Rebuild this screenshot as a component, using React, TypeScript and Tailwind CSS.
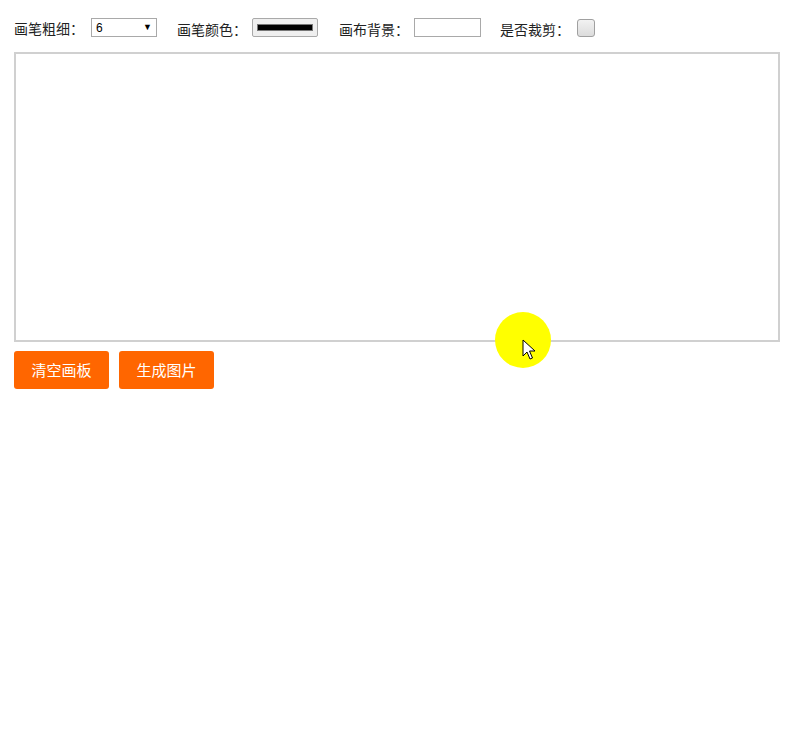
import React from 'react';

const font = { fontFamily: '"Noto Sans CJK SC", "Noto Sans", sans-serif' };

const Label = ({ children }: { children: React.ReactNode }) => (
  <span className="text-[14px] leading-[20px] text-[#222]">{children}</span>
);

export default function App() {
  return (
    <div className="relative min-h-[731px] w-[800px] bg-white" style={font}>
      <div className="flex items-center pl-[14px] pt-[18px] h-[37px]">
        <Label>画笔粗细：</Label>
        <div className="ml-[7px] flex h-[19px] w-[66px] items-center justify-between border border-[#a9a9a9] bg-white pl-[4px] pr-[4px] text-[12px] text-black" style={{ fontFamily: '"Liberation Sans", Arial, sans-serif' }}>
          <span>6</span>
          <span className="text-[9px]">▼</span>
        </div>

        <span className="ml-[20px]"><Label>画笔颜色：</Label></span>
        <div className="ml-[5px] flex h-[19px] w-[66px] items-center justify-center rounded-[2px] border border-[#a9a9a9] bg-[#efefef] px-[4px]">
          <div className="h-[7px] w-full border border-[#777] bg-black" />
        </div>

        <span className="ml-[21px]"><Label>画布背景：</Label></span>
        <div className="ml-[5px] h-[19px] w-[67px] border border-[#a9a9a9] bg-white" />

        <span className="ml-[19px]"><Label>是否裁剪：</Label></span>
        <div className="ml-[7px] h-[18px] w-[18px] rounded-[3px] border border-[#a0a0a0] bg-gradient-to-b from-[#f2f2f2] to-[#dcdcdc]" />
      </div>

      <div className="ml-[14px] mt-[15px] h-[290px] w-[766px] border-2 border-[#d0d0d0] bg-white" />

      <div className="ml-[14px] mt-[9px] flex gap-[10px]">
        <button className="h-[38px] w-[95px] rounded-[3px] bg-[#ff6600] text-[15px] text-white">清空画板</button>
        <button className="h-[38px] w-[95px] rounded-[3px] bg-[#ff6600] text-[15px] text-white">生成图片</button>
      </div>

      <div className="absolute left-[495px] top-[312px] h-[56px] w-[56px] rounded-full bg-[#ffff00]" />
      <svg className="absolute left-[522px] top-[339px]" width="14" height="22" viewBox="0 0 14 22">
        <path d="M1 1 L1 17 L5 13 L8 20 L10.5 19 L7.5 12 L13 12 Z" fill="white" stroke="black" strokeWidth="1" strokeLinejoin="round" />
      </svg>
    </div>
  );
}
